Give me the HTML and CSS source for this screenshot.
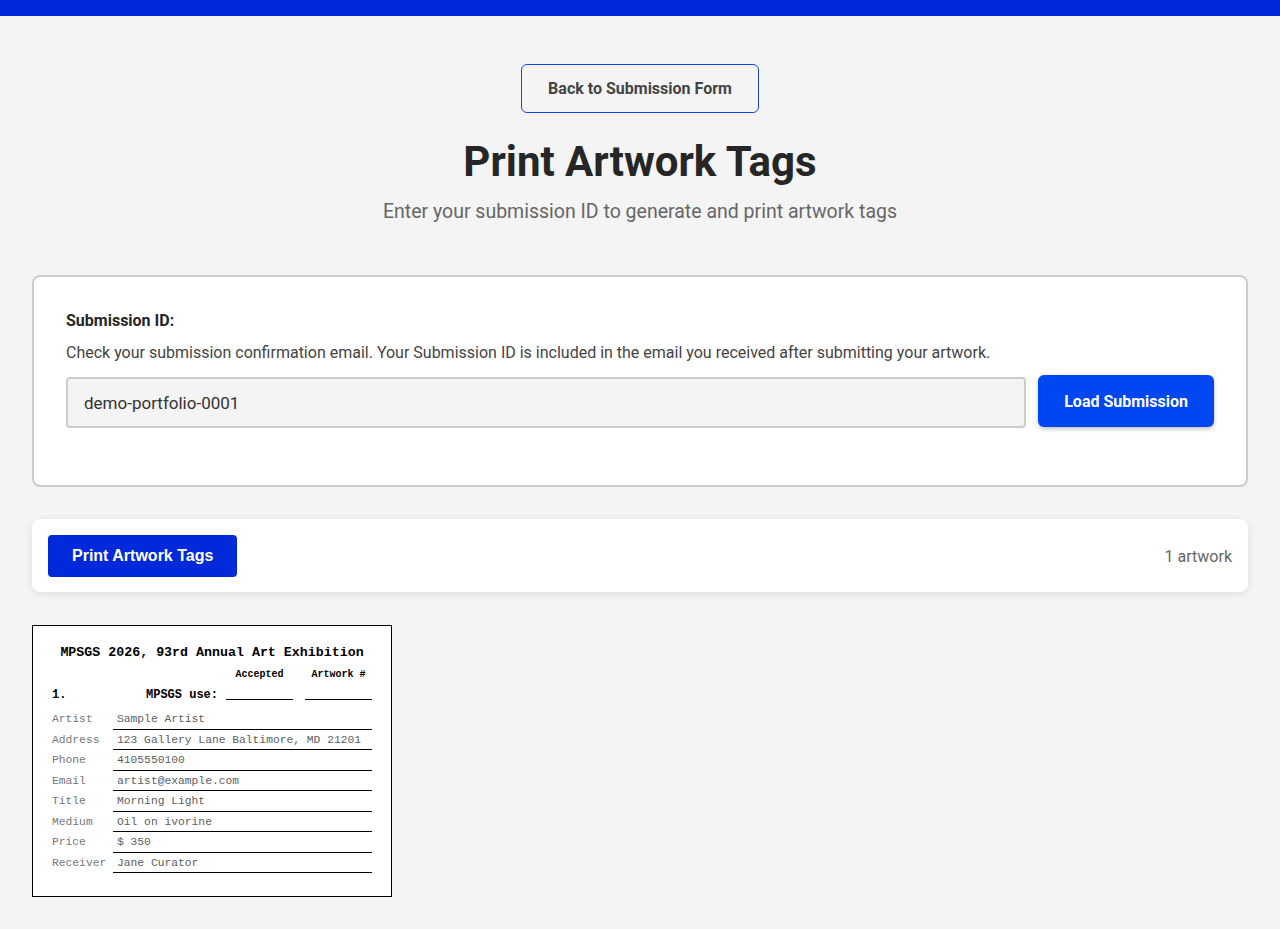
FILE: index.html
```html
<!DOCTYPE html>
<html lang="en">
<head>
    <meta charset="UTF-8">
    <meta name="viewport" content="width=device-width, initial-scale=1.0">
    <title>Print Artwork Tags</title>
    <link rel="stylesheet" href="styles.css">
</head>
<body>
    <div class="top-bar"></div>

    <div class="page">
        <header class="page-header">
            <a class="back-btn" href="#">Back to Submission Form</a>
            <h1>Print Artwork Tags</h1>
            <p class="subtitle">Enter your submission ID to generate and print artwork tags</p>
        </header>

        <section class="lookup-card">
            <label class="lookup-label" for="submission-id">Submission ID:</label>
            <p class="lookup-help">Check your submission confirmation email. Your Submission ID is included in the email you received after submitting your artwork.</p>
            <div class="lookup-row">
                <input class="lookup-input" id="submission-id" type="text" value="demo-portfolio-0001">
                <button class="load-btn" type="button">Load Submission</button>
            </div>
        </section>

        <div class="toolbar">
            <button class="print-btn" type="button" onclick="window.print()">Print Artwork Tags</button>
            <span class="count">1 artwork</span>
        </div>

        <div class="tags">
            <div class="tag">
                <div class="tag-title">MPSGS 2026, 93rd Annual Art Exhibition</div>
                <div class="use-head">
                    <span>Accepted</span>
                    <span>Artwork #</span>
                </div>
                <div class="use-row">
                    <span class="tag-num">1.</span>
                    <span class="use-label">MPSGS use:</span>
                    <span class="blank"></span>
                    <span class="blank"></span>
                </div>
                <div class="fields">
                    <span class="field-label">Artist</span><span class="field-value">Sample Artist</span>
                    <span class="field-label">Address</span><span class="field-value">123 Gallery Lane Baltimore, MD 21201</span>
                    <span class="field-label">Phone</span><span class="field-value">4105550100</span>
                    <span class="field-label">Email</span><span class="field-value">artist@example.com</span>
                    <span class="field-label">Title</span><span class="field-value">Morning Light</span>
                    <span class="field-label">Medium</span><span class="field-value">Oil on ivorine</span>
                    <span class="field-label">Price</span><span class="field-value">$ 350</span>
                    <span class="field-label">Receiver</span><span class="field-value">Jane Curator</span>
                </div>
            </div>
        </div>
    </div>
</body>
</html>
```

FILE: styles.css
```css
body {
    margin: 0;
    background-color: #f4f4f4;
    font-family: Roboto, "Noto Sans", sans-serif;
    color: #262626;
}

.top-bar {
    height: 16px;
    background-color: #0029d9;
}

.page {
    padding: 0 32px 40px;
}

/* Header */
.page-header {
    text-align: center;
    padding-top: 48px;
}

.back-btn {
    display: inline-flex;
    align-items: center;
    height: 49px;
    box-sizing: border-box;
    padding: 0 26px;
    border: 1px solid #1a45e0;
    border-radius: 6px;
    color: #444;
    font-size: 16px;
    font-weight: 700;
    text-decoration: none;
}

h1 {
    margin: 25px 0 0;
    font-size: 42px;
    line-height: 48px;
    font-weight: 700;
    color: #262626;
}

.subtitle {
    margin: 13px 0 0;
    font-size: 19.5px;
    line-height: 26px;
    color: #666;
}

/* Submission lookup */
.lookup-card {
    margin-top: 50px;
    background: white;
    border: 2px solid #ccc;
    border-radius: 8px;
    padding: 32px 32px 57px;
}

.lookup-label {
    display: block;
    font-size: 16px;
    line-height: 24px;
    font-weight: 700;
}

.lookup-help {
    margin: 8px 0 0;
    font-size: 16px;
    line-height: 24px;
    color: #444;
}

.lookup-row {
    display: flex;
    align-items: center;
    gap: 12px;
    margin-top: 12px;
}

.lookup-input {
    flex: 1;
    height: 51px;
    box-sizing: border-box;
    padding: 0 16px;
    background: #f4f4f4;
    border: 2px solid #ccc;
    border-radius: 4px;
    font-family: inherit;
    font-size: 17px;
    color: #333;
}

.load-btn {
    height: 52px;
    margin-top: -3px;
    padding: 0 26px;
    background-color: #0047f2;
    color: white;
    border: none;
    border-radius: 6px;
    box-shadow: 0 2px 4px rgba(0, 0, 0, 0.25);
    font-family: inherit;
    font-size: 16px;
    font-weight: 700;
    cursor: pointer;
}

/* Toolbar */
.toolbar {
    display: flex;
    justify-content: space-between;
    align-items: center;
    margin-top: 32px;
    padding: 16px 16px 15px;
    background: white;
    border-radius: 8px;
    box-shadow: 0 2px 8px rgba(0, 0, 0, 0.09);
}

.print-btn {
    height: 42px;
    padding: 0 24px;
    background-color: #0029d9;
    color: white;
    border: none;
    border-radius: 4px;
    font-family: "Liberation Sans", Arial, sans-serif;
    font-size: 16px;
    font-weight: 700;
    cursor: pointer;
}

.count {
    font-size: 16px;
    color: #666;
}

/* Printable tag */
.tags {
    margin-top: 33px;
}

.tag {
    width: 360px;
    box-sizing: border-box;
    padding: 19px 19px 23px;
    background: white;
    border: 1px solid #000;
    font-family: "Liberation Mono", "Courier New", monospace;
    color: #000;
}

.tag-title {
    text-align: center;
    font-size: 13.3px;
    line-height: 16px;
    font-weight: 700;
}

.use-head {
    display: flex;
    justify-content: flex-end;
    gap: 12px;
    margin-top: 8px;
    font-size: 10px;
    line-height: 12px;
    font-weight: 700;
}

.use-head span {
    width: 67px;
    text-align: center;
}

.use-row {
    display: flex;
    align-items: flex-start;
    margin-top: 7px;
    font-size: 12px;
    line-height: 14px;
    font-weight: 700;
}

.tag-num {
    width: 94px;
}

.use-label {
    flex: 1;
}

.blank {
    width: 67px;
    height: 11px;
    border-bottom: 1px solid #000;
}

.blank + .blank {
    margin-left: 12px;
}

.fields {
    display: grid;
    grid-template-columns: 61px 1fr;
    margin-top: 7px;
    font-size: 11.3px;
    line-height: 14px;
}

.field-label {
    padding: 3px 0 2.5px;
    color: #777;
    white-space: nowrap;
}

.field-value {
    padding: 3px 0 2.5px 4px;
    color: #5e5e5e;
    border-bottom: 1px solid #000;
}
```
